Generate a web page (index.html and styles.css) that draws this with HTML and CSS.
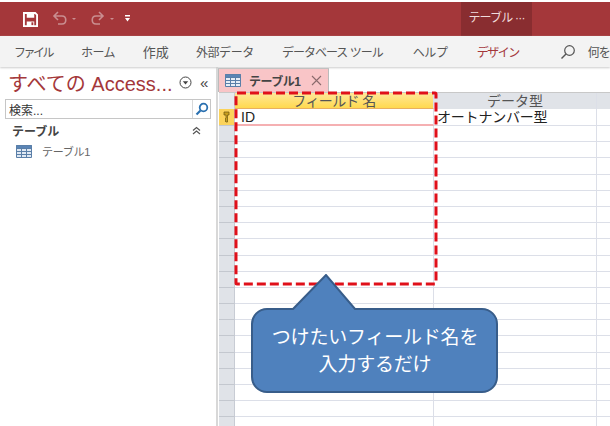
FILE: index.html
```html
<!DOCTYPE html>
<html lang="ja">
<head>
<meta charset="utf-8">
<title>テーブル1</title>
<link rel="stylesheet" href="styles.css">
</head>
<body>
<div class="app">
	<div class="titlebar">
		<svg class="qat-save" width="15" height="15" viewBox="0 0 16 16"><path d="M1 1h12l2 2v12H1z" fill="none" stroke="#fff" stroke-width="2"/><path d="M4 1h8v5H4zM4 10h8v5H4z" fill="#fff"/><path d="M9 11h2v3H9z" fill="#a4373a"/></svg>
		<svg class="qat-undo" width="38" height="16" viewBox="0 0 38 16"><path d="M3 5h7c5 0 5 8 0 8H6M6 1L2 5l4 4" fill="none" stroke="#c98e90" stroke-width="1.600"/><path d="M20 7h4l-2 2z" fill="#c98e90"/></svg>
		<svg class="qat-redo" width="28" height="16" viewBox="0 0 28 16"><path d="M13 5H7c-5 0-5 8 0 8h4M10 1l4 4-4 4" fill="none" stroke="#c98e90" stroke-width="1.600"/><path d="M21 7h4l-2 2z" fill="#c98e90"/></svg>
		<svg class="qat-more" width="8" height="10" viewBox="0 0 8 10"><path d="M1 1h5v1.500H1zM1 4h5L3.500 7.500z" fill="#fff"/></svg>
		<div class="context">テーブル ···</div>
	</div>
	<div class="ribbon">
		<span class="rtab file">ファイル</span>
		<span class="rtab home">ホーム</span>
		<span class="rtab make">作成</span>
		<span class="rtab ext">外部データ</span>
		<span class="rtab dbt">データベース ツール</span>
		<span class="rtab help">ヘルプ</span>
		<span class="rtab active">デザイン</span>
		<svg class="lens" width="16" height="16" viewBox="0 0 16 16"><circle cx="9.500" cy="6.500" r="4.800" fill="none" stroke="#555" stroke-width="1.200"/><path d="M6 10l-4.500 4.500" stroke="#555" stroke-width="1.400"/></svg>
		<span class="rtab tell">何を</span>
	</div>
	<div class="main">
		<div class="nav">
			<div class="nav-head">
				<span class="nav-title">すべての Access...</span>
				<svg width="15" height="15" viewBox="0 0 15 15"><circle cx="7.500" cy="7.500" r="5.500" fill="none" stroke="#444"/><path d="M4.800 6.200h5.400L7.500 9.500z" fill="#444"/></svg>
				<span class="nav-close">«</span>
			</div>
			<div class="search">
				<span class="search-text">検索...</span>
				<span class="search-btn">
					<svg width="14" height="14" viewBox="0 0 14 14"><circle cx="8.500" cy="5.500" r="3.800" fill="none" stroke="#2a70b0" stroke-width="1.800"/><path d="M5.500 8.500L1.500 12.500" stroke="#2a70b0" stroke-width="2.200"/></svg>
				</span>
			</div>
			<div class="group">
				<span>テーブル</span>
				<svg width="9" height="9" viewBox="0 0 9 9"><path d="M1 4.500l3.500-3 3.500 3M1 8l3.500-3 3.500 3" fill="none" stroke="#555" stroke-width="1.200"/></svg>
			</div>
			<div class="nav-item">
				<svg class="tbl-icon" width="16" height="13" viewBox="0 0 16 13"><path d="M.5.500h15v12H.5z" fill="#dfe8f3" stroke="#5a7fa8"/><path d="M.5.500h15v3H.5z" fill="#5a84b5" stroke="#5a7fa8"/><path d="M5.500 3.500v9M10.500 3.500v9M.5 6.500h15M.5 9.500h15" stroke="#5a7fa8"/></svg>
				<span>テーブル1</span>
			</div>
		</div>
		<div class="work">
			<div class="tabstrip">
				<div class="doc-tab">
					<svg class="tbl-icon" width="16" height="13" viewBox="0 0 16 13"><path d="M.5.500h15v12H.5z" fill="#e6edf6" stroke="#5a7fa8"/><path d="M.5.500h15v3H.5z" fill="#5a84b5" stroke="#5a7fa8"/><path d="M5.500 3.500v9M10.500 3.500v9M.5 6.500h15M.5 9.500h15" stroke="#5a7fa8"/></svg>
					<span class="doc-name">テーブル1</span>
					<svg class="doc-x" width="11" height="11" viewBox="0 0 11 11"><path d="M1 1l9 9M10 1l-9 9" stroke="#8a6a6c" stroke-width="1.100"/></svg>
				</div>
			</div>
			<div class="grid">
				<div class="row head">
					<div class="sel corner"></div>
					<div class="c1 current">フィールド 名</div>
					<div class="c2">データ型</div>
					<div class="c3"></div>
				</div>
				<div class="row first">
					<div class="sel key"><svg width="7" height="12" viewBox="0 0 7 12"><path d="M1 1h5v3H4.500v7H3l-1-1 1-1-1-1 1-1V4H1z" fill="#c8a020" stroke="#6a5510" stroke-width=".7"/></svg></div>
					<div class="c1 cell-id">ID</div>
					<div class="c2 cell-type">オートナンバー型</div>
					<div class="c3"></div>
				</div>
				<div class="row"><div class="sel"></div><div class="c1"></div><div class="c2"></div><div class="c3"></div></div>
				<div class="row"><div class="sel"></div><div class="c1"></div><div class="c2"></div><div class="c3"></div></div>
				<div class="row"><div class="sel"></div><div class="c1"></div><div class="c2"></div><div class="c3"></div></div>
				<div class="row"><div class="sel"></div><div class="c1"></div><div class="c2"></div><div class="c3"></div></div>
				<div class="row"><div class="sel"></div><div class="c1"></div><div class="c2"></div><div class="c3"></div></div>
				<div class="row"><div class="sel"></div><div class="c1"></div><div class="c2"></div><div class="c3"></div></div>
				<div class="row"><div class="sel"></div><div class="c1"></div><div class="c2"></div><div class="c3"></div></div>
				<div class="row"><div class="sel"></div><div class="c1"></div><div class="c2"></div><div class="c3"></div></div>
				<div class="row"><div class="sel"></div><div class="c1"></div><div class="c2"></div><div class="c3"></div></div>
				<div class="row"><div class="sel"></div><div class="c1"></div><div class="c2"></div><div class="c3"></div></div>
				<div class="row"><div class="sel"></div><div class="c1"></div><div class="c2"></div><div class="c3"></div></div>
				<div class="row"><div class="sel"></div><div class="c1"></div><div class="c2"></div><div class="c3"></div></div>
				<div class="row"><div class="sel"></div><div class="c1"></div><div class="c2"></div><div class="c3"></div></div>
				<div class="row"><div class="sel"></div><div class="c1"></div><div class="c2"></div><div class="c3"></div></div>
				<div class="row"><div class="sel"></div><div class="c1"></div><div class="c2"></div><div class="c3"></div></div>
				<div class="row"><div class="sel"></div><div class="c1"></div><div class="c2"></div><div class="c3"></div></div>
				<div class="row"><div class="sel"></div><div class="c1"></div><div class="c2"></div><div class="c3"></div></div>
				<div class="row"><div class="sel"></div><div class="c1"></div><div class="c2"></div><div class="c3"></div></div>
				<div class="row"><div class="sel"></div><div class="c1"></div><div class="c2"></div><div class="c3"></div></div>
			</div>
		</div>
	</div>
	<!-- annotation drawn over the screenshot -->
	<svg class="dash" width="204" height="195" viewBox="0 0 204 195"><rect x="2" y="2" width="200" height="191" rx="1" fill="none" stroke="#e0101a" stroke-width="3" stroke-dasharray="9 4"/></svg>
	<svg class="callout" width="252" height="124" viewBox="0 0 252 124"><path d="M43 35L76 1l29 34h127a15 15 0 0 1 15 15v53a15 15 0 0 1-15 15H17a15 15 0 0 1-15-15V50a15 15 0 0 1 15-15z" fill="#4f81bd" stroke="#385d8a" stroke-width="2"/></svg>
	<div class="callout-text">つけたいフィールド名を<br>入力するだけ</div>
</div>
</body>
</html>
```
FILE: styles.css
```css
html,body{margin:0; padding:0; background:#fff;}
body{font-family:"Liberation Sans","Noto Sans CJK JP",sans-serif; color:#333;}
.app{position:relative; width:610px; height:426px; overflow:hidden;}

.titlebar{display:flex; align-items:center; height:34px; margin-top:2px; padding-left:23px; background:#a4373a; box-sizing:border-box;}
.qat-save{margin-right:14px;}
.qat-undo{margin-right:-1px;}
.qat-redo{margin-right:7px;}
.qat-more{margin-right:329px;}
.context{width:71px; height:34px; line-height:32px; background:#892d30; color:#f0dcdc; font-size:12px; letter-spacing:-.8px; text-align:center;}

.ribbon{display:flex; align-items:center; height:31px; background:#f3f3f3; padding-left:14px; box-shadow:0 1px 2px #ccc; position:relative;}
.rtab{font-size:12px; color:#555; white-space:nowrap; flex:none;}
.file{letter-spacing:-2.5px; margin-right:29px;}
.home{letter-spacing:-.6px; margin-right:28px;}
.make{font-size:13px; margin-right:27px;}
.ext{letter-spacing:-.4px; margin-right:28px;}
.dbt{letter-spacing:-1px; margin-right:30px;}
.help{letter-spacing:-.3px; margin-right:29px;}
.rtab.active{color:#a4373a; letter-spacing:-1.500px; margin-right:41px;}
.lens{flex:none; margin-right:12px;}
.tell{letter-spacing:-1px;}

.main{display:flex; height:359px;}
.nav{width:216px; flex:none; border-right:2px solid #d8d8d8; padding-top:3px; box-sizing:content-box;}
.nav-head{display:flex; align-items:center; height:25px; padding-left:8px;}
.nav-title{font-size:20px; color:#a4373a; margin-right:3px; white-space:nowrap; width:167px;}
.nav-close{font-size:15px; margin-left:7px; color:#444; line-height:15px;}
.search{display:flex; justify-content:space-between; align-items:center; height:18px; margin:4px 5px 0 5px; border:1px solid #c6c6c6; background:#fff;}
.search-text{font-size:12px; padding-left:3px;}
.search-btn{display:flex; align-items:center; justify-content:center; width:17px; height:18px; border-left:1px solid #d8d8d8;}
.group{display:flex; justify-content:space-between; align-items:center; font-size:12px; font-weight:bold; margin-top:2px; padding:0 15px 0 12px; height:18px; color:#444;}
.nav-item{display:flex; align-items:center; font-size:11px; color:#666; padding-left:16px; height:20px; margin-top:2px; letter-spacing:-.3px;}
.nav-item .tbl-icon{margin-right:10px;}

.work{flex:1; min-width:0;}
.tabstrip{height:25px; background:#fff; padding-top:1px; box-sizing:border-box;}
.doc-tab{display:flex; align-items:center; width:111px; height:24px; background:#f9c5c7; border:1px solid #bbb; border-bottom:0; box-sizing:border-box; padding-left:6px;}
.doc-name{font-size:12px; font-weight:bold; color:#444; margin:0 11px 0 8px; white-space:nowrap; width:51px; letter-spacing:-.5px;}

.grid{border-top:1px solid #c8c8c8; margin-left:1px;}
.row{display:flex; height:16.2px; box-sizing:border-box; border-bottom:1px solid #dcdfe8;}
.row .sel{width:15px; flex:none; background:#e0e3e8; border-right:1px solid #c8ccd4; border-bottom:1px solid #c4c8cf; margin-bottom:-1px;}
.row .c1{width:199px; flex:none; border-right:1px solid #dcdfe8; box-sizing:border-box;}
.row .c2{width:163px; flex:none; border-right:1px solid #dcdfe8; box-sizing:border-box;}
.row .c3{flex:1;}
.row.head{height:16px; border-bottom:0;}
.head .c1,.head .c2{font-size:14px; line-height:16px; text-align:center; color:#555; white-space:nowrap; overflow:hidden;}
.head .c1{letter-spacing:-.6px;}
.head .current{background:linear-gradient(#ffe89a,#ffd94f); border-bottom:1px solid #e8b060;}
.head .c2,.head .c3{background:#e0e3e8;}
.head .corner{background:#e8eaee;}
.row.first{height:17px; border-bottom:1px solid #dcdfe8;}
.first .key{display:flex; align-items:center; justify-content:center; background:#fbd35b;}
.first .c1{border-bottom:2px solid #f5b0b2; height:17px;}
.cell-id,.cell-type{font-size:14px; line-height:16px; color:#222; white-space:nowrap;}
.cell-id{padding-left:6px;}
.cell-type{padding-left:3px; letter-spacing:-.2px;}

.dash{position:absolute; left:234px; top:91px;}
.callout{position:absolute; left:250px; top:274px;}
.callout-text{position:absolute; left:252px; top:324px; width:246px; color:#fff; font-size:19px; line-height:27px; letter-spacing:-.2px; text-align:center; white-space:nowrap;}
```
